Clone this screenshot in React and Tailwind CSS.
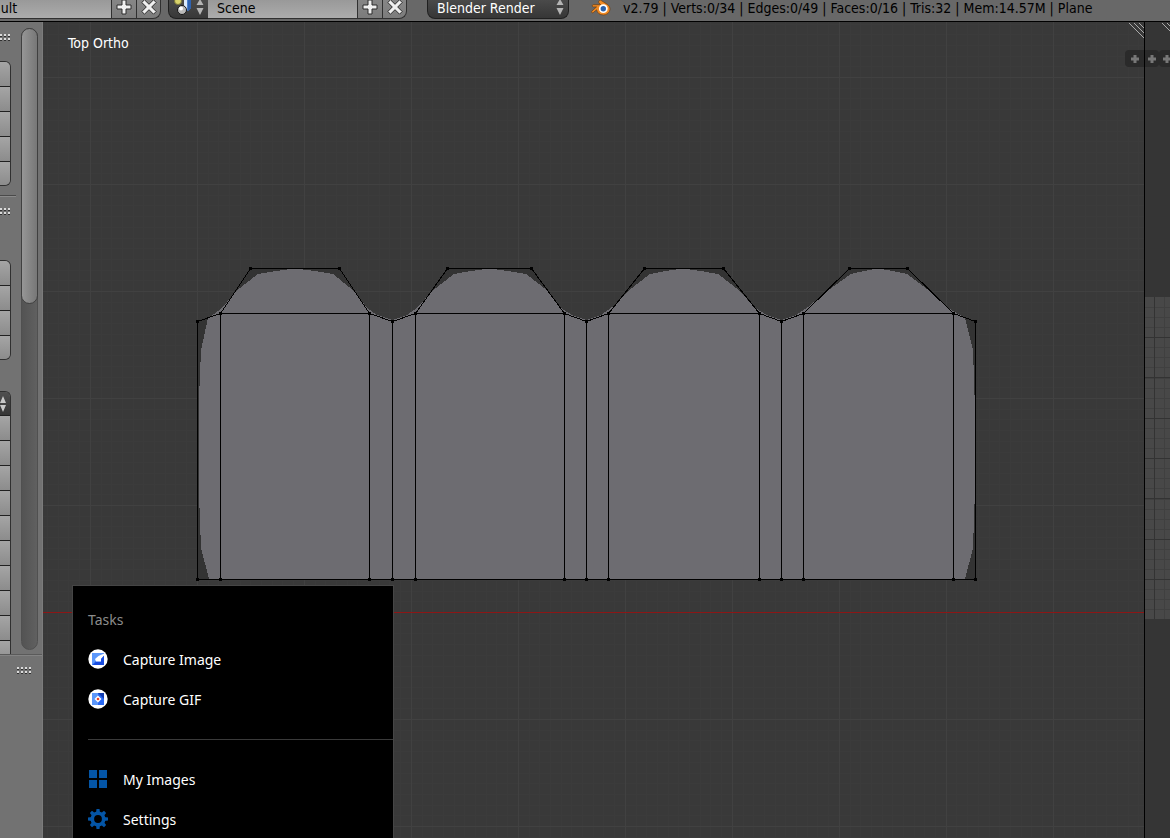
const HEADS = [
  [197, 321], [220, 313], [250, 268], [339, 268], [369, 313],
  [392, 321], [415, 313], [447, 268], [531, 268], [564, 313],
  [586, 321], [608, 313], [644, 268], [723, 268], [759, 313],
  [781, 321], [803, 313], [849, 268], [907, 268], [953, 313],
  [975, 321],
];
const COLUMNS = HEADS.filter(([, y]) => y > 300);
const BOTTOM = 579;
const VERTS = [...HEADS, ...COLUMNS.map(([x]) => [x, BOTTOM])];
const CAPS = [[220, 369], [415, 564], [608, 759], [803, 953]];

const range = (count) => Array.from({ length: count }, (_, i) => i);

const PlusIcon = () => (
  <svg width="16" height="16" viewBox="0 0 16 16">
    <path d="M6 1h4v5h5v4h-5v5H6v-5H1V6h5z" fill="#f0f0f0" stroke="#2c2c2c" />
  </svg>
);

const CloseIcon = () => (
  <svg width="16" height="16" viewBox="0 0 16 16">
    <path d="M3.500.8 8 5.300 12.500.8l2.700 2.700L10.700 8l4.500 4.500-2.700 2.700L8 10.700l-4.500 4.500-2.700-2.700L5.300 8 .8 3.500z" fill="#f0f0f0" stroke="#2c2c2c" />
  </svg>
);

const UpDown = () => (
  <svg width="8" height="16" viewBox="0 0 8 16">
    <path d="M4-1 7.500 5h-7zM4 15 7.500 8h-7z" fill="#b4b4b4" />
  </svg>
);

const SceneIcon = () => (
  <svg width="20" height="18" viewBox="0 0 20 18">
    <circle cx="5" cy="1" r="3.500" fill="#d9d36a" stroke="#77733a" />
    <path d="M11 0h7v8l-3 3-4-2z" fill="#4f83cf" />
    <path d="M11 0h3v10l-3-1z" fill="#dcebfb" />
    <path d="M18 0v8l-3 3V0z" fill="#2e62b0" />
    <circle cx="9" cy="10" r="4.500" fill="#b9b9b9" stroke="#161616" />
    <circle cx="8" cy="8.500" r="2" fill="#fff" />
  </svg>
);

const BlenderLogo = () => (
  <svg width="20" height="16" viewBox="0 0 20 16">
    <path
      d="M8.500.4c.8-.6 1.600-.2 2.200.4l5.800 3.700c1.700 1.300 2.700 3 2.500 4.900-.3 3.200-3 5.600-6.700 5.600-3.600 0-6.300-2.200-6.700-5.200L2.300 12.600c-1 .8-2.400-.3-1.500-1.400L5.500 6.900H2.300c-1.400 0-1.400-2.200 0-2.200h7.400L8 3C7.300 2.200 7.600 1 8.500.4z"
      fill="#f08a24"
      stroke="#6b3d12"
      strokeWidth=".7"
    />
    <circle cx="12.300" cy="8.700" r="4.400" fill="#fff" />
    <circle cx="12.300" cy="8.700" r="2.700" fill="#2a62ad" />
  </svg>
);

const IconButton = ({ label, last, children }) => (
  <button
    aria-label={label}
    className={`flex h-[19px] w-[25px] items-start justify-center border-b border-l border-[#303030] bg-linear-to-b from-[#868686] to-[#7c7c7c] ${
      last ? 'rounded-br-lg border-r' : ''
    }`}>
    <span className="-mt-px block">{children}</span>
  </button>
);

const TopBar = () => (
  <header className="flex h-[22px] shrink-0 items-start overflow-hidden border-b border-black bg-[#686868] text-black">
    <input
      aria-label="Screen layout"
      defaultValue="ault"
      className="-ml-[7px] h-[19px] w-[118px] border-b border-[#303030] bg-linear-to-b from-[#999] to-[#acacac] pb-[2px] outline-none"
    />
    <IconButton label="Add layout"><PlusIcon /></IconButton>
    <IconButton label="Delete layout" last><CloseIcon /></IconButton>
    <button
      aria-label="Browse scene"
      className="ml-[7px] flex h-[19px] w-10 shrink-0 items-start justify-between rounded-bl-lg border-b border-l border-[#202020] bg-linear-to-b from-[#4a4a4a] to-[#383838] pr-1 pl-1">
      <SceneIcon />
      <UpDown />
    </button>
    <input
      aria-label="Scene name"
      defaultValue="Scene"
      className="h-[19px] w-[149px] border-b border-[#303030] bg-linear-to-b from-[#999] to-[#acacac] pb-[2px] pl-[9px] outline-none"
    />
    <IconButton label="Add scene"><PlusIcon /></IconButton>
    <IconButton label="Delete scene" last><CloseIcon /></IconButton>
    <button className="ml-5 flex h-[19px] w-[142px] shrink-0 items-start justify-between rounded-b-lg border-x border-b border-[#202020] bg-linear-to-b from-[#4a4a4a] to-[#363636] pr-1 pl-[9px] text-white">
      <span className="leading-4">Blender Render</span>
      <UpDown />
    </button>
    <span className="ml-[22px] shrink-0"><BlenderLogo /></span>
    <span className="ml-3 leading-4 whitespace-nowrap">
      v2.79 | Verts:0/34 | Edges:0/49 | Faces:0/16 | Tris:32 | Mem:14.57M | Plane
    </span>
  </header>
);

const Grip = ({ className = '' }) => (
  <svg width="15" height="8" className={className}>
    {range(8).map((i) => (
      <g key={i}>
        <rect x={(i % 4) * 4} y={i < 4 ? 0 : 4} width="2" height="2" fill="#dadada" />
        <rect x={(i % 4) * 4} y={i < 4 ? 2 : 6} width="2" height="1" fill="#303030" />
      </g>
    ))}
  </svg>
);

const ToolGroup = ({ names, open, className = '' }) => (
  <div className={`w-[11px] shrink-0 overflow-hidden border-t border-r border-[#303030] ${open ? 'rounded-tr-md' : 'rounded-r-md border-b'} ${className}`}>
    {open && (
      <button aria-label="Add mode" className="flex h-6 w-full items-center border-b border-[#202020] bg-linear-to-b from-[#505050] to-[#353535]">
        <svg width="8" height="18" viewBox="0 0 8 18">
          <path d="M3 1 6 8H0zM3 17 6 10H0z" fill="#c8c8c8" />
        </svg>
      </button>
    )}
    {names.map((name) => (
      <button
        key={name}
        aria-label={name}
        className="block h-[25px] w-full border-b border-[#202020] bg-linear-to-b from-[#a5a5a5] to-[#8c8c8c] last:h-[23px] last:border-b-0"
      />
    ))}
  </div>
);

const ToolShelf = () => (
  <aside className="flex w-[43px] shrink-0 flex-col border-r border-[#7c7c7c] bg-[#727272]">
    <div className="flex h-[633px] shrink-0 border-b border-[#5a5a5a]">
      <div className="flex w-4 flex-col overflow-hidden">
        <Grip className="mt-3 -ml-1 shrink-0" />
        <ToolGroup
          className="mt-[19px]"
          names={['Translate', 'Rotate', 'Scale', 'Shrink', 'Push']}
        />
        <div className="mt-[9px] h-[2px] shrink-0 border-t border-[#4a4a4a] bg-[#8a8a8a]" />
        <Grip className="mt-[11px] -ml-1 shrink-0" />
        <ToolGroup
          className="mt-11"
          names={['Slide Edge', 'Slide Vertex', 'Noise', 'Smooth']}
        />
        <ToolGroup
          open
          className="mt-[31px]"
          names={['Extrude', 'Inset', 'Face', 'Subdivide', 'Loop Cut', 'Offset', 'Duplicate', 'Spin', 'Screw', 'Knife']}
        />
      </div>
      <div className="mt-[6px] mb-1 ml-[5px] w-[17px] rounded-full border border-[#505050] bg-linear-to-r from-[#535353] to-[#606060]">
        <div className="-m-px h-[276px] rounded-full border border-[#404040] bg-linear-to-r from-[#969696] to-[#777]" />
      </div>
    </div>
    <div className="flex-1 border-t border-[#838383]">
      <Grip className="mt-[11px] ml-[17px]" />
    </div>
  </aside>
);

const MESH_FILL =
  'M208 318 L214 314 L222 308 L236 291 L258 274 L276 271 L295 268.500 L315 271 L333 274 L354 291 L367 308 L377 315 L392 320 ' +
  'L407 315 L418 307 L432 291 L454 274 L471 271 L489 268.500 L508 271 L526 274 L548 291 L561 308 L572 315 L586 320 ' +
  'L601 315 L612 307 L628 291 L650 274 L666 271 L683 268.500 L701 271 L718 274 L740 291 L755 308 L767 315 L781 320 ' +
  'L796 315 L808 307 L827 291 L851 274 L864 271 L878 268.500 L893 271 L907 274 L931 292 L950 309 L965 318 ' +
  'L973 350 L975 410 L975 490 L973 548 L965 579 H209 L201 548 L198.500 480 V410 L201 350 Z';

// Scene drawn in window coordinates, shifted by the shelf and the top bar.
const Viewport = () => (
  <main className="relative min-w-0 flex-1 overflow-hidden bg-[#393939]">
    <svg className="absolute inset-0 h-full w-full" shapeRendering="crispEdges">
      <g transform="translate(-43 -22)">
        <g fill="#3b3b3b">
          {range(104).map((i) => (
            <rect key={i} x={Math.round(47 + i * 10.7)} y="22" width="1" height="100%" />
          ))}
          {range(78).map((i) => (
            <rect key={i} x="43" y={Math.round(23.5 + i * 10.7)} width="100%" height="1" />
          ))}
        </g>
        <g fill="#414141">
          {range(12).map((i) => (
            <rect key={i} x={90 + i * 107} y="22" width="1" height="100%" />
          ))}
          {range(9).map((i) => (
            <rect key={i} x="43" y={77 + i * 107} width="100%" height="1" />
          ))}
        </g>
        <rect x="43" y="612" width="100%" height="1" fill="#8c1616" />
        <path d={`M${HEADS.map((p) => p.join(' ')).join('L')}V579H197Z`} fill="#333" />
        <path d={MESH_FILL} fill="#6d6c71" />
        <g transform="translate(.5 .5)" fill="none" stroke="#000">
          <path d={`M${HEADS.map((p) => p.join(' ')).join('L')}`} />
          <path d={COLUMNS.map(([x, y]) => `M${x} ${y}V${BOTTOM}`).join('')} />
          <path d={CAPS.map(([a, b]) => `M${a} 313H${b}`).join('')} />
          <path d={`M197 ${BOTTOM}H975`} />
        </g>
        {VERTS.map(([x, y]) => (
          <rect key={`${x}-${y}`} x={x - 1} y={y - 1} width="3" height="3" />
        ))}
      </g>
    </svg>
    <div className="relative pt-3 pl-[25px] leading-[18px] text-white">Top Ortho</div>
    <svg className="absolute top-px right-0" width="15" height="15" stroke="#aaa">
      <path d="M0 0 15 15M5 0 15 10M10 0 15 5" />
    </svg>
    <button aria-label="Open properties" className="absolute top-7 right-0 flex h-[17px] w-[19px] items-center justify-center rounded-l bg-[#2a2a2a]">
      <SmallPlus />
    </button>
  </main>
);

const SmallPlus = () => (
  <svg width="8" height="8" className="shrink-0">
    <path d="M2.500 0h3v2.500H8v3H5.500V8h-3V5.500H0v-3h2.500z" fill="#777" />
  </svg>
);

const ImageEditor = () => (
  <section className="relative w-[26px] shrink-0 overflow-hidden border-l border-black bg-[#353535]">
    <svg className="absolute inset-0 h-full w-full" shapeRendering="crispEdges">
      <g transform="translate(-1145 -22)">
        <rect x="1145" y="297" width="40" height="322" fill="#484848" />
        <g fill="#404040">
          {range(31).map((i) => (
            <rect key={i} x="1145" y={Math.round(307 + i * 10.08)} width="40" height="1" />
          ))}
          <rect x="1164" y="297" width="1" height="322" />
        </g>
        <g fill="#333">
          {range(7).map((i) => (
            <rect key={i} x="1145" y={Math.round(337 + i * 40.3)} width="40" height="1" />
          ))}
          <rect x="1154" y="297" width="1" height="322" />
        </g>
      </g>
    </svg>
    <svg className="absolute top-px right-0" width="8" height="10" stroke="#aaa">
      <path d="M0 0 10 10M5 0 10 5" />
    </svg>
    <div className="absolute top-7 left-0 flex">
      <button aria-label="Open tools" className="flex h-[17px] w-[14px] items-center justify-center rounded-r bg-[#2a2a2a]"><SmallPlus /></button>
      <button aria-label="Open side panel" className="flex h-[17px] w-[13px] items-center rounded-l bg-[#2a2a2a] pl-1"><SmallPlus /></button>
    </div>
  </section>
);

const CaptureImageIcon = () => (
  <svg width="20" height="20" viewBox="0 0 20 20">
    <circle cx="10" cy="10" r="9.700" fill="#fff" />
    <path d="M4 4h12v12H4z" fill="#2463ee" />
    <path d="M4 4h12l-5 4-4 5-3 3z" fill="#5b97fb" />
    <path d="M16 4.500v2l-3 3.500v2.500H8L7 10l3.500-3z" fill="#fff" />
    <path d="M16 7v9H5l3-3h5v-3z" fill="#174be0" />
  </svg>
);

const CaptureGifIcon = () => (
  <svg width="20" height="20" viewBox="0 0 20 20">
    <circle cx="10" cy="10" r="9.700" fill="#fff" />
    <path d="M4 4h12v12H4z" fill="#2868f4" />
    <path d="M4 4h6v12H4z" fill="#5b97fb" />
    <path d="M10 4h6v6z" fill="#123cb0" />
    <path d="M10 6.500l3.500 3.500-3.500 3.500L6.500 10z" fill="#fff" />
    <circle cx="10" cy="10" r="1.300" fill="#e8432c" />
  </svg>
);

const ImagesIcon = () => (
  <svg width="20" height="20" viewBox="0 0 20 20">
    <path d="M1 1h8v8H1zM11 1h8v8h-8zM1 11h8v8H1zM11 11h8v8h-8z" fill="#0455a6" />
  </svg>
);

const SettingsIcon = () => (
  <svg width="20" height="20" viewBox="0 0 20 20" fill="#0455a6">
    {range(8).map((i) => (
      <path key={i} d="M8.500 0h3l.5 4H8z" transform={`rotate(${i * 45} 10 10)`} />
    ))}
    <circle cx="10" cy="10" r="5.700" fill="none" stroke="#0455a6" strokeWidth="3.600" />
  </svg>
);

const MenuItem = ({ icon, children }) => (
  <button className="flex h-10 w-full items-center gap-[15px] pl-[15px] text-left text-white">
    {icon}
    <span>{children}</span>
  </button>
);

const JumpList = () => (
  <nav className="absolute top-[585px] bottom-0 left-[72px] w-[322px] overflow-hidden border border-b-0 border-[#454545] bg-black pt-[13px] font-['Noto_Sans',sans-serif] text-[14px]">
    <h2 className="flex h-10 items-center pl-[15px] text-[#8c8c8c]">Tasks</h2>
    <MenuItem icon={<CaptureImageIcon />}>Capture Image</MenuItem>
    <MenuItem icon={<CaptureGifIcon />}>Capture GIF</MenuItem>
    <hr className="mt-5 mb-[19px] ml-[15px] border-[#3a3a3a]" />
    <MenuItem icon={<ImagesIcon />}>My Images</MenuItem>
    <MenuItem icon={<SettingsIcon />}>Settings</MenuItem>
  </nav>
);

export default function App() {
  return (
    <div className="relative flex h-screen flex-col overflow-hidden bg-[#393939] font-['DejaVu_Sans_Condensed','DejaVu_Sans',sans-serif] text-[14px]">
      <TopBar />
      <div className="flex min-h-0 flex-1">
        <ToolShelf />
        <Viewport />
        <ImageEditor />
      </div>
      <JumpList />
    </div>
  );
}
